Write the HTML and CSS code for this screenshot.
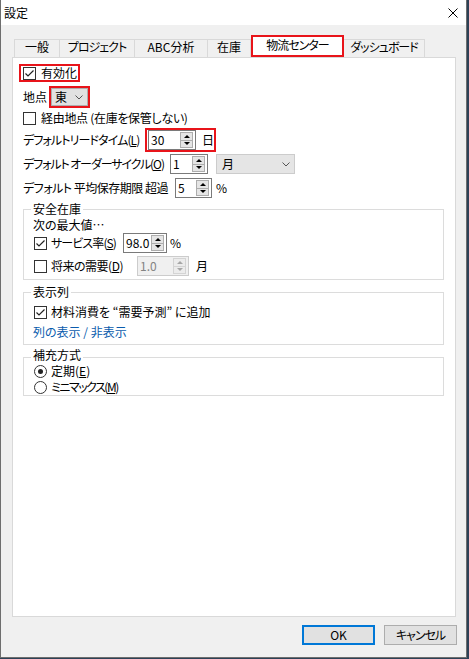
FILE: index.html
```html
<!DOCTYPE html>
<html lang="ja">
<head>
<meta charset="utf-8">
<title>設定</title>
<link rel="stylesheet" href="styles.css">
</head>
<body>
<div class="win">
  <div class="titlebar">
    <span class="title">設定</span>
    <svg class="close" width="10" height="10" viewBox="0 0 10 10"><path d="M0.5 0.5L9.5 9.5M9.5 0.5L0.5 9.5" stroke="#000" stroke-width="1" fill="none"/></svg>
  </div>

  <div class="tabs">
    <div class="tab t1">一般</div>
    <div class="tab t2 kt">プロジェクト</div>
    <div class="tab t3">ABC分析</div>
    <div class="tab t4">在庫</div>
    <div class="tab t5 sel kt">物流センター</div>
    <div class="tab t6 kt">ダッシュボード</div>
  </div>

  <div class="panel">
    <div class="row r-enable">
      <span class="hl hl-enable">
        <span class="cb"><svg width="11" height="11" viewBox="0 0 11 11"><polyline points="1.5,5.5 4,8 9.5,2.5" fill="none" stroke="#222" stroke-width="1.2"/></svg></span>
        <span class="txt">有効化</span>
      </span>
    </div>

    <div class="row r-site">
      <span class="txt">地点</span>
      <span class="hl hl-site">
        <span class="combo combo-site"><span class="cval">東</span><svg class="chev" width="8" height="5" viewBox="0 0 8 5"><polyline points="0.5,0.5 4,4 7.5,0.5" fill="none" stroke="#555" stroke-width="1"/></svg></span>
      </span>
    </div>

    <div class="row r-via">
      <span class="cb"></span>
      <span class="txt t-via">経由地点 (在庫を保管しない)</span>
    </div>

    <div class="row r-lead">
      <span class="lbl w-lead">デフォルトリードタイム(<u>L</u>)</span>
      <span class="hl hl-lead">
        <span class="num w-lead-num"><span class="val">30</span><span class="spin"><i class="up"></i><i class="dn"></i></span></span>
        <span class="unit u-day">日</span>
      </span>
    </div>

    <div class="row r-cycle">
      <span class="lbl w-cycle">デフォルト オーダーサイクル(<u>O</u>)</span>
      <span class="num w-cycle-num"><span class="val">1</span><span class="spin"><i class="up"></i><i class="dn"></i></span></span>
      <span class="combo combo-month"><span class="cval">月</span><svg class="chev" width="8" height="5" viewBox="0 0 8 5"><polyline points="0.5,0.5 4,4 7.5,0.5" fill="none" stroke="#555" stroke-width="1"/></svg></span>
    </div>

    <div class="row r-shelf">
      <span class="lbl w-shelf">デフォルト 平均保存期限 超過</span>
      <span class="num w-shelf-num"><span class="val">5</span><span class="spin"><i class="up"></i><i class="dn"></i></span></span>
      <span class="unit u-pct">%</span>
    </div>

    <fieldset class="grp grp1">
      <legend>安全在庫</legend>
      <div class="g-line">次の最大値…</div>
      <div class="row r-svc">
        <span class="lblc w-svc">
          <span class="cb"><svg width="11" height="11" viewBox="0 0 11 11"><polyline points="1.5,5.5 4,8 9.5,2.5" fill="none" stroke="#222" stroke-width="1.2"/></svg></span>
          <span class="txt t-svc">サービス率(<u>S</u>)</span>
        </span>
        <span class="num w-svc-num"><span class="val">98.0</span><span class="spin"><i class="up"></i><i class="dn"></i></span></span>
        <span class="unit u-pct2">%</span>
      </div>
      <div class="row r-fut">
        <span class="lblc w-fut">
          <span class="cb"></span>
          <span class="txt t-fut">将来の需要(<u>D</u>)</span>
        </span>
        <span class="num dis w-fut-num"><span class="val">1.0</span><span class="spin"><i class="up"></i><i class="dn"></i></span></span>
        <span class="unit u-mon">月</span>
      </div>
    </fieldset>

    <fieldset class="grp grp2">
      <legend>表示列</legend>
      <div class="row r-mat">
        <span class="cb"><svg width="11" height="11" viewBox="0 0 11 11"><polyline points="1.5,5.5 4,8 9.5,2.5" fill="none" stroke="#222" stroke-width="1.2"/></svg></span>
        <span class="txt">材料消費を <span class="q">“</span>需要予測<span class="q">”</span> に追加</span>
      </div>
      <div class="row r-link">
        <span class="link">列の表示 / 非表示</span>
      </div>
    </fieldset>

    <fieldset class="grp grp3">
      <legend>補充方式</legend>
      <div class="row r-rad1">
        <span class="rb on"></span>
        <span class="txt">定期(<u>E</u>)</span>
      </div>
      <div class="row r-rad2">
        <span class="rb"></span>
        <span class="txt t-mm">ミニマックス(<u>M</u>)</span>
      </div>
    </fieldset>
  </div>

  <div class="buttons">
    <span class="btn def">OK</span>
    <span class="btn kt">キャンセル</span>
  </div>
</div>
</body>
</html>
```

FILE: styles.css
```css
* { box-sizing: border-box; }

html { background: #2d4156; }

body {
  margin: 0;
  font-family: "Noto Sans CJK JP", "Noto Sans", sans-serif;
  font-size: 12px;
  line-height: 16px;
  color: #000;
  font-feature-settings: "palt";
}

.win {
  width: 467px;
  height: 658px;
  background: #f0f0f0;
  border: 1px solid #6e6e6e;
  border-top: none;
  display: flex;
  flex-direction: column;
}

.titlebar {
  height: 25px;
  flex-shrink: 0;
  background: #fff;
  display: flex;
  align-items: center;
  justify-content: space-between;
  padding: 1px 8px 0 3px;
}

.title { line-height: 16px; }

/* tabs */
.tabs {
  display: flex;
  align-items: flex-end;
  height: 22px;
  flex-shrink: 0;
  margin: 10px 0 0 13px;
}

.tab {
  height: 18px;
  border: 1px solid #d9d9d9;
  border-bottom: none;
  border-left: none;
  background: #f0f0f0;
  text-align: center;
  line-height: 14px;
  white-space: nowrap;
}

.kt { letter-spacing: -1px; }

.t1 { width: 46px; border-left: 1px solid #d9d9d9; }
.t2 { width: 75px; }
.t3 { width: 73px; }
.t4 { width: 43px; }
.t5 { width: 93px; }
.t6 { width: 81px; }

.tab.sel {
  height: 22px;
  background: #fff;
  border: 2px solid #e8141a;
  line-height: 16px;
}

/* panel */
.panel {
  width: 444px;
  height: 560px;
  flex-shrink: 0;
  margin-left: 11px;
  background: #fff;
  border: 1px solid #d9d9d9;
  padding: 0 11px 0 10px;
}

.row {
  display: flex;
  align-items: center;
  white-space: nowrap;
}

.hl { border: 2px solid #e8141a; display: flex; align-items: center; }

.cb {
  width: 13px;
  height: 13px;
  flex-shrink: 0;
  border: 1px solid #333;
  background: #fff;
  display: inline-flex;
  margin-right: 5px;
}

.cb svg { display: block; }

.rb {
  width: 13px;
  height: 13px;
  flex-shrink: 0;
  border: 1px solid #333;
  border-radius: 50%;
  background: #fff;
  display: inline-flex;
  align-items: center;
  justify-content: center;
  margin: 0 4px 0 1px;
}

.rb.on::before {
  content: "";
  width: 5px;
  height: 5px;
  border-radius: 50%;
  background: #222;
}

.r-enable { margin-top: 6px; }
.hl-enable { margin-left: -4px; padding: 0 1px 0 2px; height: 18px; }

.r-site { margin-top: 4px; height: 22px; }
.hl-site { margin-left: 2px; }

.combo {
  display: flex;
  align-items: center;
  background: #e1e1e1;
  border: 1px solid #adadad;
}

.combo .chev { margin-left: auto; }

.combo-site { width: 37px; height: 18px; padding: 0 4px 0 3px; }

.r-via { margin-top: 2px; height: 16px; }
.t-via { letter-spacing: -0.3px; }

.r-lead { margin-top: 2px; height: 24px; }
.lbl { flex-shrink: 0; overflow: hidden; }
.w-lead { width: 122px; letter-spacing: -0.9px; }
.hl-lead { padding-left: 1px; height: 24px; }

.num {
  display: flex;
  align-items: center;
  height: 20px;
  border: 1px solid #7a7a7a;
  background: #fff;
  padding-left: 2px;
  flex-shrink: 0;
}

.num .val { flex: 1; }

.spin {
  width: 13px;
  height: 16px;
  margin-right: 2px;
  display: flex;
  flex-direction: column;
  border: 1px solid #adadad;
  background: #e5e5e5;
}

.spin i {
  flex: 1;
  display: flex;
  align-items: center;
  justify-content: center;
}

.spin i + i { border-top: 1px solid #adadad; }

.spin .up::before,
.spin .dn::before {
  content: "";
  width: 0;
  height: 0;
  border-left: 3px solid transparent;
  border-right: 3px solid transparent;
}

.spin .up::before { border-bottom: 3px solid #000; }
.spin .dn::before { border-top: 3px solid #000; }

.num.dis { border-color: #cccccc; background: #f0f0f0; color: #838383; }
.num.dis .spin { border-color: #d4d4d4; background: #ececec; }
.num.dis .spin i + i { border-top-color: #d4d4d4; }
.num.dis .spin .up::before { border-bottom-color: #a6a6a6; }
.num.dis .spin .dn::before { border-top-color: #a6a6a6; }

.w-lead-num { width: 48px; }
.u-day { margin-left: 6px; }

.r-cycle { margin-top: 2px; height: 20px; }
.w-cycle { width: 147px; letter-spacing: -1.1px; }
.w-cycle-num { width: 38px; }
.combo-month {
  width: 79px;
  height: 20px;
  margin-left: 8px;
  background: #e5e5e5;
  border-color: #cccccc;
  padding: 0 4px 0 5px;
}

.r-shelf { margin-top: 4px; height: 20px; }
.w-shelf { width: 152px; letter-spacing: -0.5px; }
.w-shelf-num { width: 37px; }
.u-pct { margin-left: 4px; }

/* groups */
.grp {
  margin: 0;
  min-width: 0;
  border: 1px solid #dcdcdc;
  padding: 0 9px 3px 9px;
}

.grp legend {
  padding: 0 2px;
  margin-left: -2px;
  line-height: 16px;
}

.grp .cb { margin: 0 4px 0 1px; }

.grp1 { margin-top: 3px; }
.g-line { height: 16px; }
.r-svc { height: 20px; }
.lblc { display: flex; align-items: center; flex-shrink: 0; overflow: hidden; }
.w-svc { width: 90px; }
.t-svc { letter-spacing: -0.9px; }
.w-svc-num { width: 44px; }
.u-pct2 { margin-left: 3px; }
.r-fut { height: 20px; margin-top: 3px; }
.w-fut { width: 104px; }
.t-fut { letter-spacing: -0.5px; }
.w-fut-num { width: 52px; }
.u-mon { margin-left: 7px; }

.grp2 { margin-top: 4px; padding-bottom: 4px; }
.r-mat { margin-top: 4px; height: 16px; }
.q { font-feature-settings: normal; }
.r-link { margin-top: 4px; height: 16px; }
.link { color: #0b5cad; }

.grp3 { margin-top: 3px; padding-bottom: 0; }
.grp3 legend { line-height: 14px; padding-bottom: 4px; }
.r-rad1 { height: 16px; margin-top: -3px; }
.r-rad2 { height: 16px; }
.t-mm { letter-spacing: -1.5px; }

/* buttons */
.buttons {
  display: flex;
  justify-content: flex-end;
  gap: 9px;
  margin-top: 8px;
  padding-right: 9px;
}

.btn {
  width: 73px;
  height: 20px;
  background: #e1e1e1;
  border: 1px solid #adadad;
  display: flex;
  align-items: center;
  justify-content: center;
  line-height: 16px;
}

.btn.def { border: 2px solid #0078d7; }
```
